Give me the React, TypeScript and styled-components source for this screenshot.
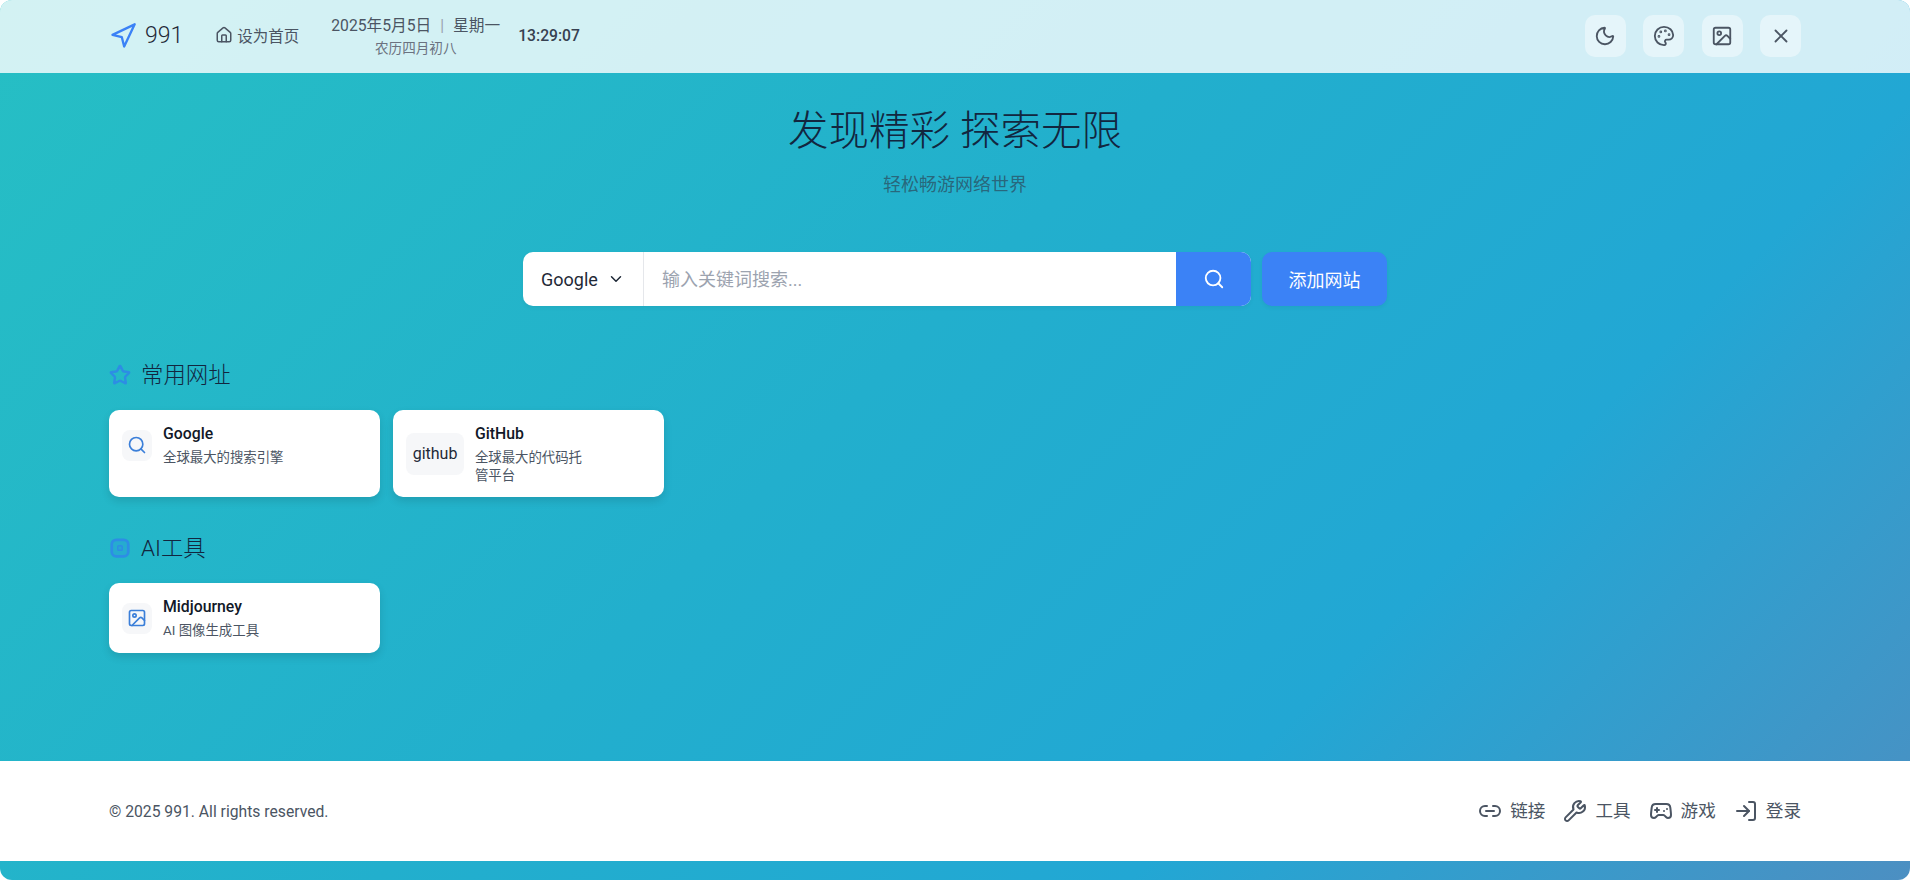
import React from 'react';
import styled, { createGlobalStyle } from 'styled-components';
import {
  Navigation, House, Moon, Palette, Image, X, ChevronDown, Search, Star, Link2, Wrench, Gamepad2, LogIn,
} from 'lucide-react';

const GlobalStyle = createGlobalStyle`
  html, body {
    margin: 0;
    padding: 0;
  }
  body {
    font-family: Roboto, "Noto Sans CJK SC", sans-serif;
    background: #fff;
  }
  * {
    box-sizing: border-box;
  }
`;

const Page = styled.div`
  width: 1910px;
  height: 880px;
  overflow: hidden;
  display: flex;
  flex-direction: column;
  border-radius: 12px;
  background: linear-gradient(135deg, #26bfc4 0%, #22afcd 45%, #22a7d4 72%, #4c8fc2 100%);
`;

const Header = styled.header`
  flex: none;
  height: 73px;
  padding: 0 109px 2px;
  display: flex;
  align-items: center;
  justify-content: space-between;
  background: rgba(255, 255, 255, 0.8);
`;

const HeaderLeft = styled.div`
  display: flex;
  align-items: center;
`;

const Logo = styled.div`
  display: flex;
  align-items: center;
  gap: 8px;
  font-size: 23px;
  font-weight: 300;
  color: #1f2937;
  svg {
    color: #3b82f6;
  }
`;

const HomeLink = styled.a`
  display: flex;
  align-items: center;
  gap: 4px;
  margin-left: 32px;
  margin-bottom: 1px;
  font-size: 15.5px;
  color: #4b5563;
`;

const DateBlock = styled.div`
  margin-left: 32px;
  margin-bottom: 1px;
  display: flex;
  flex-direction: column;
  align-items: center;
  gap: 1px;
`;

const DateLine = styled.div`
  font-size: 15.7px;
  color: #4b5563;
`;

const Divider = styled.span`
  margin: 0 9px;
  color: #9ca3af;
`;

const Lunar = styled.div`
  font-size: 13.6px;
  color: #6b7280;
`;

const Clock = styled.div`
  margin-left: 18px;
  font-size: 15.7px;
  font-weight: 500;
  color: #374151;
`;

const HeaderActions = styled.div`
  display: flex;
  gap: 17.5px;
`;

const IconButton = styled.button`
  width: 41px;
  height: 42px;
  padding: 0;
  border: none;
  border-radius: 10px;
  display: flex;
  align-items: center;
  justify-content: center;
  color: #4b5563;
  background: rgba(255, 255, 255, 0.42);
`;

const Main = styled.main`
  flex: 1;
  padding: 0 109px;
`;

const Hero = styled.div`
  text-align: center;
  padding-top: 30px;
`;

const Title = styled.h1`
  margin: 0;
  font-size: 40.5px;
  line-height: 56px;
  font-weight: 300;
  color: #12263f;
`;

const Subtitle = styled.p`
  margin: 13px 0 0;
  font-size: 18px;
  line-height: 26px;
  color: rgba(45, 55, 72, 0.62);
`;

const SearchRow = styled.div`
  margin-top: 54px;
  display: flex;
  justify-content: center;
  gap: 11px;
`;

const SearchBox = styled.div`
  width: 728px;
  height: 54px;
  display: flex;
  border-radius: 10px;
  overflow: hidden;
  background: #fff;
  box-shadow: 0 2px 4px rgba(0, 0, 0, 0.05);
`;

const EngineSelect = styled.div`
  width: 121px;
  display: flex;
  align-items: center;
  gap: 9px;
  padding-left: 18px;
  border-right: 1px solid #e5e7eb;
  font-size: 18px;
  color: #1f2937;
`;

const SearchInput = styled.input`
  flex: 1;
  min-width: 0;
  border: none;
  outline: none;
  padding: 0 18px;
  font-family: inherit;
  font-size: 18px;
  color: #1f2937;
  &::placeholder {
    color: #9ca3af;
  }
`;

const SearchButton = styled.button`
  width: 75px;
  padding: 0;
  border: none;
  display: flex;
  align-items: center;
  justify-content: center;
  color: #fff;
  background: #3b82f6;
`;

const AddButton = styled.button`
  width: 125px;
  height: 54px;
  border: none;
  border-radius: 10px;
  font-family: inherit;
  font-size: 18px;
  color: #fff;
  background: #3b82f6;
  box-shadow: 0 2px 4px rgba(0, 0, 0, 0.05);
`;

const Section = styled.section<{ $top: number }>`
  margin-top: ${(props) => props.$top}px;
`;

const SectionTitle = styled.h2`
  margin: 0;
  display: flex;
  align-items: center;
  gap: 10px;
  height: 32px;
  font-size: 22.4px;
  font-weight: 300;
  color: #12263f;
  svg {
    flex: none;
    margin-top: 4px;
    color: #2f86ea;
    opacity: 0.85;
  }
`;

const CardGrid = styled.div`
  margin-top: 21px;
  display: grid;
  grid-template-columns: repeat(6, 1fr);
  gap: 13px;
`;

const Card = styled.a`
  min-height: 70px;
  padding: 13px 80px 12px 13px;
  border-radius: 10px;
  background: #fff;
  box-shadow: 0 4px 8px rgba(0, 0, 0, 0.12);
`;

const CardRow = styled.div`
  display: flex;
  align-items: center;
  gap: 11px;
`;

const CardIcon = styled.div`
  flex: none;
  min-width: 30px;
  min-height: 31px;
  padding: 5px;
  border-radius: 8px;
  display: flex;
  align-items: center;
  justify-content: center;
  color: #3b7fd9;
  background: #f6f7f9;
`;

const IconLabel = styled.span`
  padding: 0 1.5px;
  font-size: 16px;
  line-height: 32px;
  color: #1f2937;
`;

const CardBody = styled.div`
  flex: 1;
  min-width: 0;
`;

const CardName = styled.div`
  font-size: 15.8px;
  line-height: 21px;
  font-weight: 500;
  color: #111827;
  white-space: nowrap;
`;

const CardDesc = styled.div`
  margin-top: 5px;
  font-size: 13.4px;
  line-height: 18px;
  color: #4b5563;
`;

const Footer = styled.footer`
  flex: none;
  height: 100px;
  margin-bottom: 19px;
  padding: 0 109px;
  display: flex;
  align-items: center;
  justify-content: space-between;
  background: #fff;
`;

const Copyright = styled.div`
  font-size: 15.7px;
  color: #4b5563;
`;

const FooterLinks = styled.nav`
  display: flex;
  gap: 18px;
`;

const FooterLink = styled.a`
  display: flex;
  align-items: center;
  gap: 8px;
  font-size: 17.6px;
  line-height: 24px;
  color: #4b5563;
`;

const footerLinks = [
  { label: '链接', icon: Link2 },
  { label: '工具', icon: Wrench },
  { label: '游戏', icon: Gamepad2 },
  { label: '登录', icon: LogIn },
];

// rounded chip outline, heavier than the lucide cpu so the pins don't show
const ChipIcon = () => (
  <svg width="22" height="22" viewBox="0 0 24 24" fill="currentColor" fillOpacity="0.25" stroke="currentColor" strokeWidth="3" strokeLinejoin="round">
    <rect x="3" y="3" width="18" height="18" rx="5" />
    <rect x="9.5" y="9.5" width="5" height="5" rx="1" strokeWidth="1.5" />
  </svg>
);

const App: React.FC = () => {
  return (
    <Page>
      <GlobalStyle />
      <Header>
        <HeaderLeft>
          <Logo>
            <Navigation size={28} />
            991
          </Logo>
          <HomeLink>
            <House size={18} />
            设为首页
          </HomeLink>
          <DateBlock>
            <DateLine>
              2025年5月5日<Divider>|</Divider>星期一
            </DateLine>
            <Lunar>农历四月初八</Lunar>
          </DateBlock>
          <Clock>13:29:07</Clock>
        </HeaderLeft>
        <HeaderActions>
          <IconButton><Moon size={22} /></IconButton>
          <IconButton><Palette size={22} /></IconButton>
          <IconButton><Image size={22} /></IconButton>
          <IconButton><X size={22} /></IconButton>
        </HeaderActions>
      </Header>

      <Main>
        <Hero>
          <Title>发现精彩 探索无限</Title>
          <Subtitle>轻松畅游网络世界</Subtitle>
        </Hero>
        <SearchRow>
          <SearchBox>
            <EngineSelect>
              Google
              <ChevronDown size={18} />
            </EngineSelect>
            <SearchInput placeholder="输入关键词搜索..." />
            <SearchButton><Search size={22} /></SearchButton>
          </SearchBox>
          <AddButton>添加网站</AddButton>
        </SearchRow>

        <Section $top={51}>
          <SectionTitle><Star size={22} strokeWidth={2.6} />常用网址</SectionTitle>
          <CardGrid>
            <Card>
              <CardRow>
                <CardIcon><Search size={20} /></CardIcon>
                <CardBody>
                  <CardName>Google</CardName>
                  <CardDesc>全球最大的搜索引擎</CardDesc>
                </CardBody>
              </CardRow>
            </Card>
            <Card>
              <CardRow>
                <CardIcon><IconLabel>github</IconLabel></CardIcon>
                <CardBody>
                  <CardName>GitHub</CardName>
                  <CardDesc>全球最大的代码托管平台</CardDesc>
                </CardBody>
              </CardRow>
            </Card>
          </CardGrid>
        </Section>

        <Section $top={33}>
          <SectionTitle><ChipIcon />AI工具</SectionTitle>
          <CardGrid>
            <Card>
              <CardRow>
                <CardIcon><Image size={20} /></CardIcon>
                <CardBody>
                  <CardName>Midjourney</CardName>
                  <CardDesc>AI 图像生成工具</CardDesc>
                </CardBody>
              </CardRow>
            </Card>
          </CardGrid>
        </Section>
      </Main>

      <Footer>
        <Copyright>© 2025 991. All rights reserved.</Copyright>
        <FooterLinks>
          {footerLinks.map(({ label, icon: Icon }) => (
            <FooterLink key={label}>
              <Icon size={24} />
              {label}
            </FooterLink>
          ))}
        </FooterLinks>
      </Footer>
    </Page>
  );
};

export default App;
